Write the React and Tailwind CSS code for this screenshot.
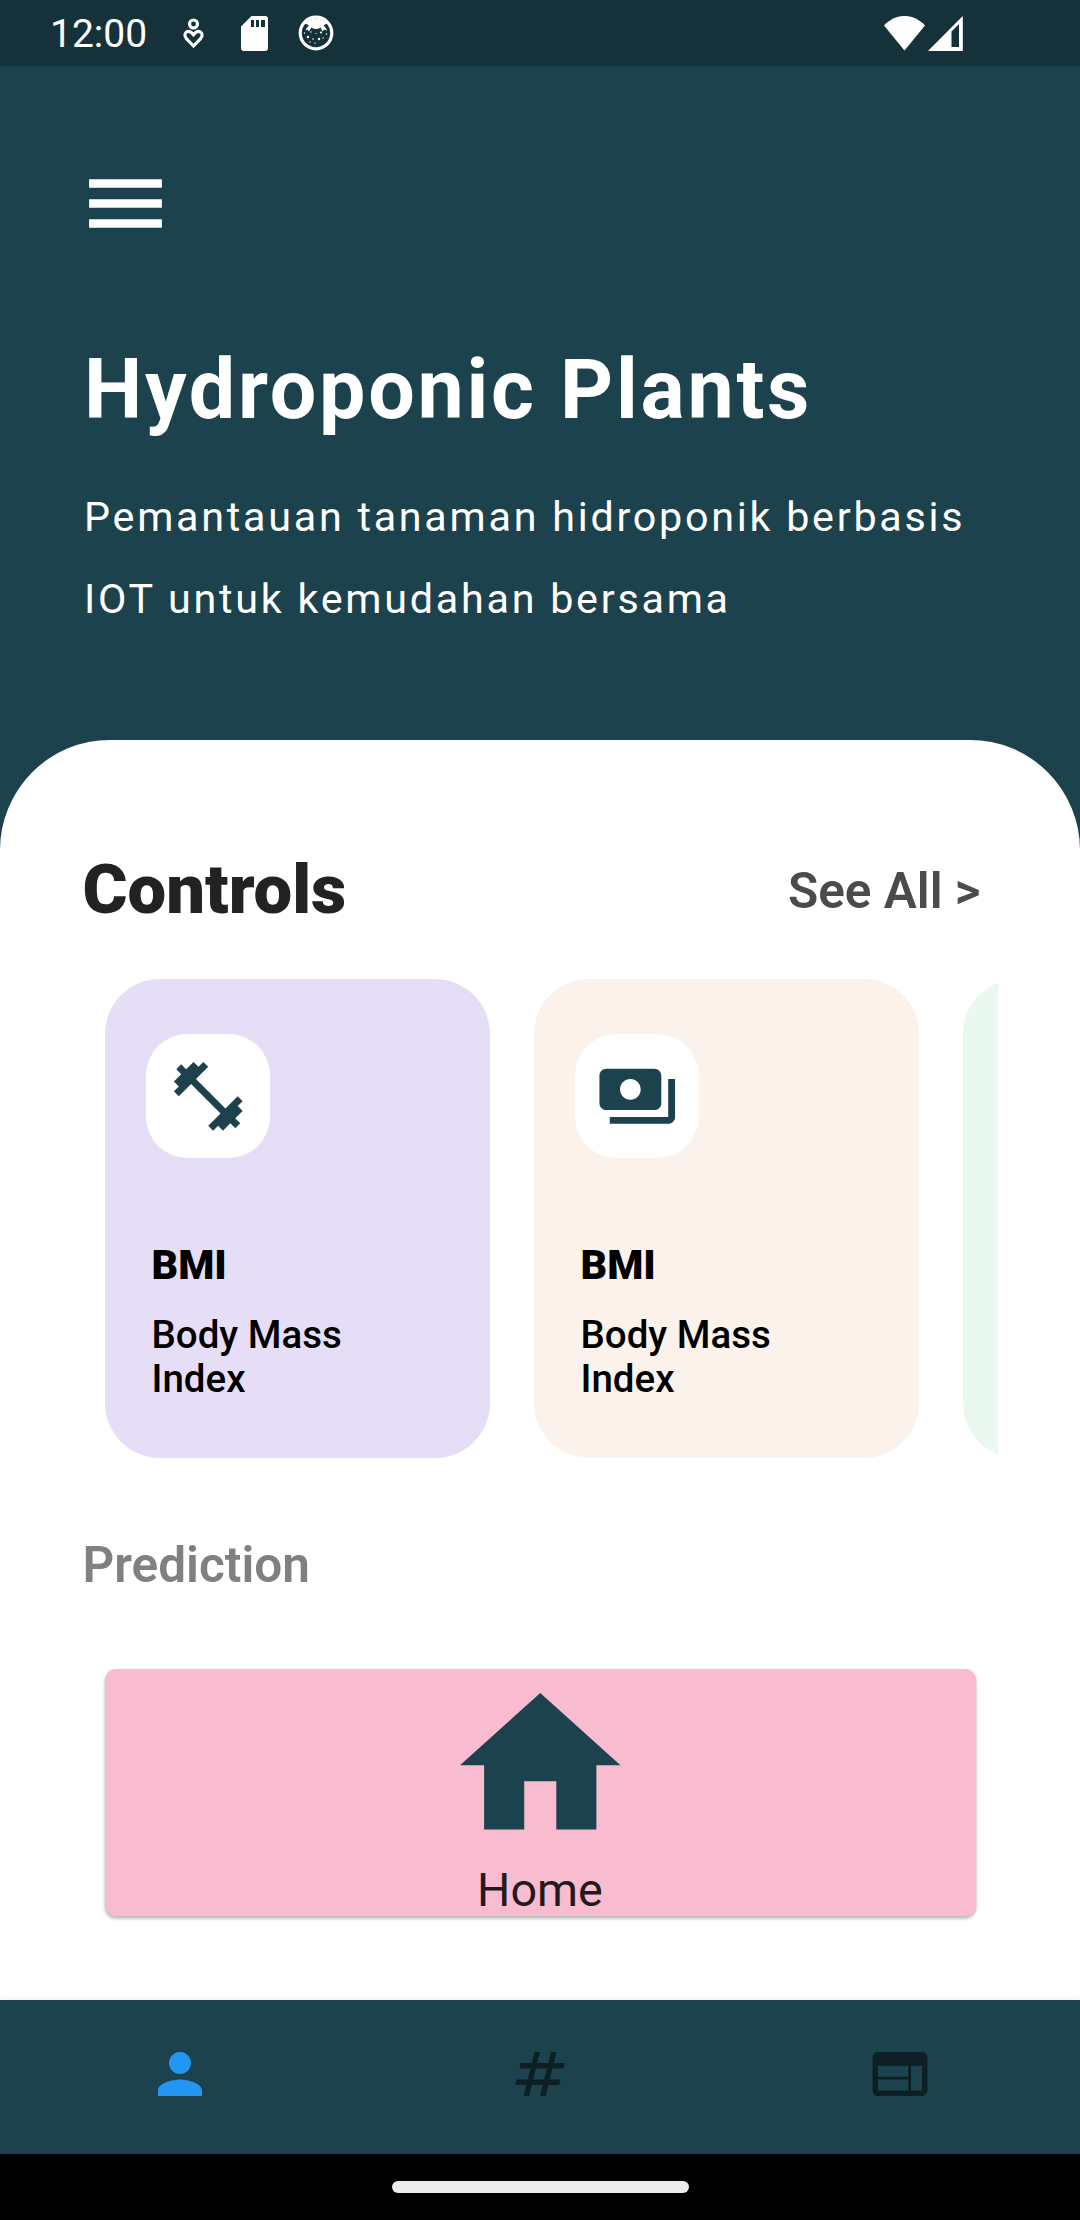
const controls = [
  { tone: "bg-[#e5def6]", icon: "dumbbell", title: "BMI", text: "Body Mass Index" },
  { tone: "bg-[#faf2eb]", icon: "payments", title: "BMI", text: "Body Mass Index" },
  { tone: "bg-[#e9f9ef]" },
];

const paths = {
  dumbbell:
    "M20.57 14.86L22 13.43 20.57 12 17 15.57 8.43 7 12 3.43 10.57 2 9.14 3.43 7.71 2 5.57 4.14 4.14 2.71 2.71 4.14l1.43 1.43L2 7.71l1.43 1.43L2 10.57 3.43 12 7 8.43 15.57 17 12 20.57 13.43 22l1.43-1.43L16.29 22l2.14-2.14 1.43 1.43 1.43-1.43-1.43-1.43L22 16.29z",
  payments:
    "M19 14V6c0-1.1-.9-2-2-2H3c-1.1 0-2 .9-2 2v8c0 1.1.9 2 2 2h14c1.1 0 2-.9 2-2zm-9-1c-1.66 0-3-1.34-3-3s1.34-3 3-3 3 1.34 3 3-1.34 3-3 3zm13-6v11c0 1.1-.9 2-2 2H4v-2h17V7h2z",
  menu: "M3 18h18v-2.1H3zM3 13.05h18v-2.1H3zM3 6v2.1h18V6z",
  home: "M10 20v-6h4v6h5v-8h3L12 3 2 12h3v8z",
  person:
    "M12 12c2.21 0 4-1.79 4-4s-1.79-4-4-4-4 1.79-4 4 1.79 4 4 4zm0 2c-2.67 0-8 1.34-8 4v2h16v-2c0-2.66-5.33-4-8-4z",
  numbers:
    "M20.5 10L21 8h-4l1-4h-2l-1 4h-4l1-4h-2L9 8H5l-.5 2h4l-1 4h-4L3 16h4l-1 4h2l1-4h4l-1 4h2l1-4h4l.5-2h-4l1-4h4zm-7 4h-4l1-4h4l-1 4z",
  web: "M20 4H4c-1.1 0-1.99.9-1.99 2L2 18c0 1.1.9 2 2 2h16c1.1 0 2-.9 2-2V6c0-1.1-.9-2-2-2zm-5 14H4v-4h11v4zm0-5H4V9h11v4zm5 5h-4V9h4v9z",
};

function Icon({ name, className }) {
  return (
    <svg viewBox="0 0 24 24" fill="currentColor" className={className} aria-hidden="true">
      <path d={paths[name]} />
    </svg>
  );
}

function StatusBar() {
  return (
    <div className="flex h-[66px] items-center justify-between bg-[#15323a] pl-[50px] pr-[117px] text-white">
      <div className="flex items-center">
        <span className="w-[133px] pt-[2px] text-[39px] leading-[46px]">12:00</span>
        <svg viewBox="0 0 22 31" className="h-[31px] w-[22px]" fill="none" stroke="white" strokeWidth="3.1">
          <circle cx="10.5" cy="6" r="4" />
          <path d="M10.5 28 3.4 20.6C1.4 18.2 1.6 15.4 3.2 14.2c2-1.5 4.8-.6 7.3 2.6 2.5-3.2 5.3-4.1 7.3-2.6 1.6 1.2 1.8 4-.2 6.4z" />
        </svg>
        <svg viewBox="0 0 27 35" className="ml-[36px] h-[35px] w-[27px]" fill="white">
          <path fillRule="evenodd" d="M10.5 0H24a3 3 0 0 1 3 3v29a3 3 0 0 1-3 3H3a3 3 0 0 1-3-3V10.5zM10 4v7h3V4zm5 0v7h3V4zm5 0v7h4V4z" />
        </svg>
        <svg viewBox="0 0 36 36" className="ml-[29.5px] h-[36px] w-[36px]">
          <circle cx="18" cy="18" r="15.8" fill="none" stroke="white" strokeWidth="3.2" />
          <path d="M7 8.500C11 2 25 2 29 8.500l-3.500 1.700c1.500 1.500 3 3.300 3.500 5.300l-3-1-1.500 2-2-4c-3 2-6 2-9 0l-2.500 4-1.500-2-2 1c.5-2 2-3.800 3.500-5.300z" fill="white" />
          <g fill="white">
            <circle cx="10" cy="22" r="1.2" />
            <circle cx="21" cy="24" r="1.2" />
            <circle cx="23" cy="17.500" r="1.1" />
            <circle cx="13" cy="17" r=".7" />
            <circle cx="15" cy="24" r=".8" />
            <circle cx="17" cy="28" r=".7" />
            <circle cx="28.500" cy="19" r=".8" />
            <circle cx="6.500" cy="18" r=".7" />
            <circle cx="25" cy="23" r=".7" />
            <circle cx="12" cy="27" r=".7" />
            <circle cx="18" cy="18.500" r=".6" />
          </g>
        </svg>
      </div>
      <div className="flex items-center gap-[3px]">
        <svg viewBox="0 0 41 35" className="h-[35px] w-[41px]" fill="white">
          <path d="M0 9.500C12-3.200 29-3.200 41 9.500L20.500 34.500z" />
        </svg>
        <svg viewBox="0 0 35 35" className="h-[35px] w-[35px]" fill="white">
          <path fillRule="evenodd" d="M0 35 34.800 0v35zM23.500 15.500V31h7.500V8z" />
        </svg>
      </div>
    </div>
  );
}

function ControlCard({ tone, icon, title, text }) {
  return (
    <div className={`h-[478.5px] w-[385px] shrink-0 rounded-[55px] pl-[41.5px] pt-[55px] ${tone}`}>
      {icon && (
        <div className="flex size-[123.75px] items-center justify-center rounded-[41.25px] bg-white text-[#1c434d]">
          <Icon name={icon} className="size-[82.5px]" />
        </div>
      )}
      {title && (
        <div className="pl-[5.5px] text-black">
          <p className="mt-[83px] text-[41.25px] font-black leading-[48px]">{title}</p>
          <p className="mt-[24px] w-[220px] text-[38.5px] font-medium leading-[44px]">{text}</p>
        </div>
      )}
    </div>
  );
}

export default function App() {
  return (
    <div className="flex h-[2220px] w-[1080px] flex-col overflow-hidden bg-[#1c434d] font-['Roboto',sans-serif]">
      <StatusBar />
      <header className="h-[674px] shrink-0 pt-[89px] text-white">
        <Icon name="menu" className="ml-[77px] size-[97px]" />
        <h1 className="mt-[90px] whitespace-nowrap pl-[84px] text-[82.5px] font-bold leading-[96px] tracking-[2.75px]">
          Hydroponic Plants
        </h1>
        <p className="mt-[38px] pl-[84px] text-[41.25px] leading-[82px] tracking-[2.75px]">
          Pemantauan tanaman hidroponik berbasis
          <br />
          IOT untuk kemudahan bersama
        </p>
      </header>

      <main className="h-[1260px] shrink-0 rounded-t-[110px] bg-white px-[82.5px] pt-[111px]">
        <div className="flex items-center justify-between pr-[17px]">
          <h2 className="text-[68.75px] font-black leading-[78px] text-[#222222]">Controls</h2>
          <span className="pt-[2px] text-[49.5px] font-semibold leading-[58px] text-[#4b4b4b]">See All &gt;</span>
        </div>
        <div className="mt-[50px] flex gap-[44px] overflow-hidden pl-[22px]">
          {controls.map((c, i) => (
            <ControlCard key={i} {...c} />
          ))}
        </div>
        <h3 className="mt-[78px] text-[49.5px] font-semibold leading-[58px] text-[#808080]">Prediction</h3>
        <div className="mx-[22px] mt-[75.500px] flex h-[247px] flex-col items-center rounded-[11px] bg-[#f8bbd0] shadow-[0_3px_3px_rgba(0,0,0,0.2),0_1px_4px_rgba(0,0,0,0.12)]">
          <Icon name="home" className="size-[192.5px] shrink-0 text-[#1c434d]" />
          <span className="mt-[1.5px] text-[46.75px] leading-[54px] text-[#231a1d]">Home</span>
        </div>
      </main>

      <nav className="grid h-[154px] shrink-0 grid-cols-3 place-items-center bg-[#1c434d] pb-[6px] text-[#0c1f25] shadow-[0_-1px_6px_rgba(0,0,0,0.08)]">
        <Icon name="person" className="size-[66px] text-[#2196f3]" />
        <Icon name="numbers" className="size-[66px]" />
        <Icon name="web" className="size-[66px]" />
      </nav>
      <div className="flex h-[66px] shrink-0 items-center justify-center bg-black">
        <div className="h-[11.5px] w-[297px] rounded-full bg-[#ececec]" />
      </div>
    </div>
  );
}
